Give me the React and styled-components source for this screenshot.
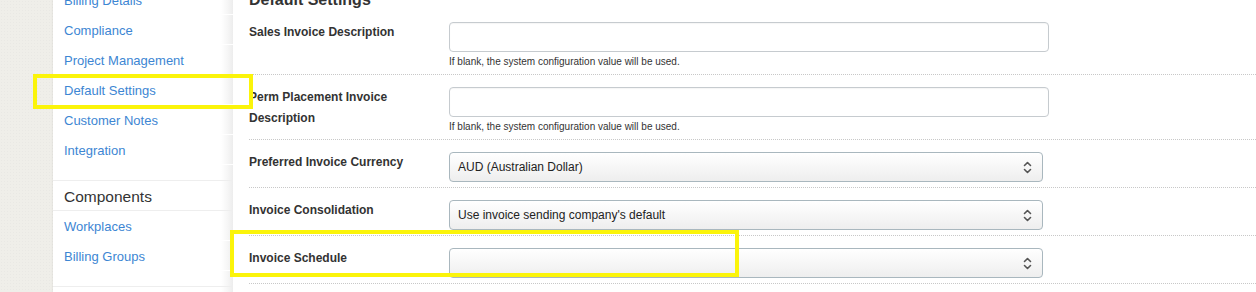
import React from 'react'
import styled, { createGlobalStyle } from 'styled-components'

const GlobalStyle = createGlobalStyle`
  html, body {
    margin: 0;
    padding: 0;
    background: #fff;
    overflow: hidden;
  }
  body {
    font-family: 'Liberation Sans', Arial, Helvetica, sans-serif;
    color: #333;
  }
`

const Page = styled.div`
  position: relative;
  display: flex;
  margin-top: -15px;
  height: 320px;
`
const Texture = styled.div`
  width: 53px;
  flex-shrink: 0;
  background-color: #efeee9;
  background-image: radial-gradient(rgba(0, 0, 0, 0.025) 1px, transparent 1px);
  background-size: 3px 3px;
  box-shadow: inset -1px 0 2px rgba(0, 0, 0, 0.04);
`
const Sidebar = styled.nav`
  width: 180px;
  flex-shrink: 0;
  background: linear-gradient(to right, #fff 0, #fff 168px, #f7f7f7 174px, #ededed 180px);
`
const NavList = styled.ul`
  list-style: none;
  margin: 0;
  padding: 0 0 15px;
  border-bottom: 1px solid #eeeeee;
`
const NavItem = styled.li`
  height: 29px;
  border-bottom: 1px solid #fff;
  padding-left: 11px;
  line-height: 32px;
  font-size: 13px;
  color: #3d86d3;
`
const NavHeader = styled.div`
  height: 29px;
  line-height: 31px;
  padding-left: 11px;
  font-size: 15.5px;
  color: #333;
  border-bottom: 1px solid #eeeeee;
`
const Main = styled.main`
  flex: 1;
  padding-left: 16px;
`
const Heading = styled.h2`
  margin: 5px 0 0;
  font-size: 16px;
  line-height: 20px;
  font-weight: bold;
  color: #333;
`
const Row = styled.div`
  display: flex;
  padding: 12px 0 5px;
  border-bottom: 1px dotted #c8c8c8;
`
const Label = styled.label`
  width: 200px;
  flex-shrink: 0;
  font-size: 12px;
  font-weight: bold;
  line-height: 21px;
  color: #333;
`
const Field = styled.div`
  display: flex;
  flex-direction: column;
`
const TextInput = styled.input`
  box-sizing: border-box;
  width: 600px;
  height: 30px;
  margin: 0;
  border: 1px solid #c6cbcf;
  border-radius: 4px;
  background: #fff;
  box-shadow: inset 0 1px 1px rgba(0, 0, 0, 0.04);
`
const Help = styled.div`
  margin-top: 3px;
  font-size: 10px;
  line-height: 14px;
  color: #333;
`
const SelectBox = styled.div`
  box-sizing: border-box;
  display: flex;
  align-items: center;
  justify-content: space-between;
  width: 594px;
  height: 30px;
  padding: 0 10px 0 8px;
  border: 1px solid #a9b7be;
  border-radius: 4px;
  background: linear-gradient(to bottom, #ffffff, #eeeeee);
  font-size: 12px;
  color: #222;
`
const Highlight = styled.div`
  position: absolute;
  box-sizing: border-box;
  border: 4px solid #fbf40a;
  pointer-events: none;
`

const Arrows = () => (
  <svg width="9" height="13" viewBox="0 0 9 13" fill="none" stroke="#555" strokeWidth="1.6" strokeLinecap="round" strokeLinejoin="round">
    <path d="M1.5 4.5 L4.5 1.5 L7.5 4.5" />
    <path d="M1.5 8.5 L4.5 11.5 L7.5 8.5" />
  </svg>
)

const Select = ({ value }) => (
  <SelectBox>
    <span>{value}</span>
    <Arrows />
  </SelectBox>
)

const links = ['Billing Details', 'Compliance', 'Project Management', 'Default Settings', 'Customer Notes', 'Integration']
const components = ['Workplaces', 'Billing Groups']
const HELP = 'If blank, the system configuration value will be used.'

const App = () => {
  return (
    <>
      <GlobalStyle />
      <Page>
        <Texture />
        <Sidebar>
          <NavList>
            {links.map((l) => (
              <NavItem key={l}>{l}</NavItem>
            ))}
          </NavList>
          <NavHeader>Components</NavHeader>
          <NavList>
            {components.map((l) => (
              <NavItem key={l}>{l}</NavItem>
            ))}
          </NavList>
        </Sidebar>
        <Main>
          <Heading>Default Settings</Heading>
          <Row>
            <Label>Sales Invoice Description</Label>
            <Field>
              <TextInput type="text" />
              <Help>{HELP}</Help>
            </Field>
          </Row>
          <Row>
            <Label>
              Perm Placement Invoice
              <br />
              Description
            </Label>
            <Field>
              <TextInput type="text" />
              <Help>{HELP}</Help>
            </Field>
          </Row>
          <Row>
            <Label>Preferred Invoice Currency</Label>
            <Select value="AUD (Australian Dollar)" />
          </Row>
          <Row>
            <Label>Invoice Consolidation</Label>
            <Select value="Use invoice sending company's default" />
          </Row>
          <Row>
            <Label>Invoice Schedule</Label>
            <Select value="" />
          </Row>
        </Main>
        <Highlight style={{ left: 33, top: 89, width: 220, height: 35 }} />
        <Highlight style={{ left: 230, top: 245, width: 509, height: 47 }} />
      </Page>
    </>
  )
}

export default App
